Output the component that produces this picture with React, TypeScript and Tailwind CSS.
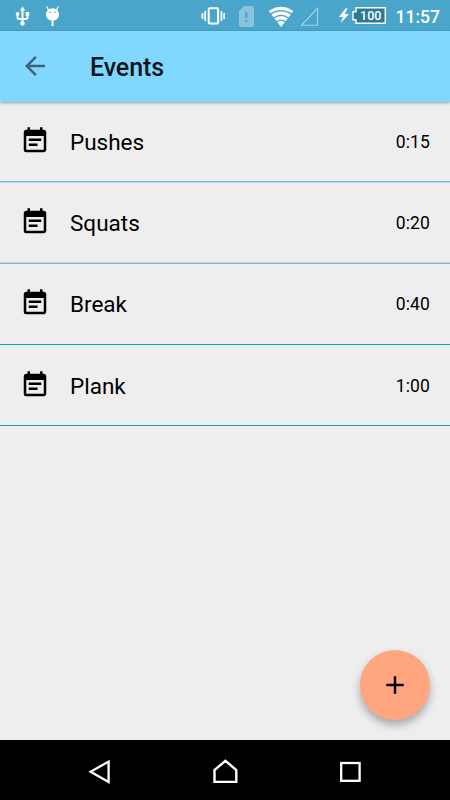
import React from 'react';
import { MdAdd, MdArrowBack, MdEventNote } from 'react-icons/md';

interface WorkoutEvent {
  name: string;
  time: string;
  divider: string;
}

const EVENTS: WorkoutEvent[] = [
  { name: 'Pushes', time: '0:15', divider: 'h-[80px] pt-px border-[#7bb3ce] shadow-[0_1px_0_#b4daec]' },
  { name: 'Squats', time: '0:20', divider: 'h-[82px] border-[#7bb3ce] shadow-[inset_0_-1px_0_#b4daec]' },
  { name: 'Break', time: '0:40', divider: 'h-[81px] border-[#0c9cc8]' },
  { name: 'Plank', time: '1:00', divider: 'h-[81px] pt-px border-[#2795bb]' },
];

const StatusBar: React.FC = () => (
  <div className="h-[31px] shrink-0 bg-[#4aa5cb]">
    <svg width="450" height="31" viewBox="0 0 450 31" fill="none">
      {/* usb */}
      <g stroke="#fff" strokeWidth="1.9">
        <path d="M22.5 9v14M17.5 14v3.2q0 1.8 2 1.8h6q2 0 2-1.8V14" />
      </g>
      <g fill="#fff">
        <path d="M22.5 6.5l2.7 4h-5.4z" />
        <circle cx="22.5" cy="23.5" r="2.2" />
        <circle cx="17.6" cy="13.8" r="1.9" />
        <path d="M25.6 12h3.6v3.6h-3.6z" />
      </g>
      {/* debug */}
      <ellipse cx="52.5" cy="14.5" rx="6.5" ry="6.2" fill="#fff" />
      <path d="M48.5 10L46.7 6.5M56.5 10l1.8-3.5" stroke="#fff" strokeWidth="1.2" />
      <path d="M52.5 21v5" stroke="#fff" strokeWidth="2" />
      <circle cx="50" cy="12.3" r="0.8" fill="#4aa5cb" />
      <circle cx="55" cy="12.3" r="0.8" fill="#4aa5cb" />
      {/* vibrate */}
      <rect x="208.7" y="8.2" width="9.4" height="15.4" rx="1" stroke="#fff" strokeWidth="2" />
      <path d="M205.2 11v10M221.4 11v10M202.4 13v6M224.2 13v6" stroke="#fff" strokeWidth="1.8" />
      {/* sim */}
      <path d="M244 6h8q2 0 2 2v17q0 2-2 2h-11q-2 0-2-2V11z" fill="#89c3dc" />
      <path d="M246.3 12v6M246.3 19.8v2.4" stroke="#4aa5cb" strokeWidth="2.2" />
      {/* wifi */}
      <path d="M268.8 11q12.2-8.6 24.6 0L281.1 27z" fill="#fff" />
      <path
        d="M270.2 14.2q10.9-7.3 21.8 0M273.1 18.2q8-5.6 16 0M276.1 22q5-3.6 10 0"
        stroke="#4aa5cb"
        strokeWidth="1.2"
      />
      {/* signal */}
      <path d="M317.5 8.2v17.1h-16z" stroke="#a4d2e5" strokeWidth="1.1" />
      {/* battery */}
      <path d="M345.8 8.2L338.8 17h4.2l-2.6 6.2 8.6-9.2h-4.4l3-5.8z" fill="#fff" />
      <path d="M356 7.7h29.3v15.6H356v-3.6h-3v-8h3z" fill="#2f7893" stroke="#fff" strokeWidth="1.4" />
      <text x="370.7" y="20.1" textAnchor="middle" fill="#fff" className="font-['Roboto',sans-serif] text-[12.5px] font-medium">
        100
      </text>
      <text x="440" y="22.6" textAnchor="end" fill="#fff" className="font-['Roboto',sans-serif] text-[17.5px] font-medium">
        11:57
      </text>
    </svg>
  </div>
);

const NavigationBar: React.FC = () => (
  <div className="flex h-[60px] shrink-0 items-center justify-between bg-black px-[85px] pt-[3px]">
    <svg width="30" height="30" viewBox="0 0 30 30" fill="none" stroke="#fff" strokeWidth="2.3">
      <path d="M23.6 4.6v20.4L5.6 14.8z" />
    </svg>
    <svg width="30" height="30" viewBox="0 0 30 30" fill="none" stroke="#fff" strokeWidth="2.4">
      <path d="M4.5 24.9h21.8V13L15.4 3.8 4.5 13z" />
    </svg>
    <svg width="30" height="30" viewBox="0 0 30 30" fill="none" stroke="#fff" strokeWidth="2.3">
      <rect x="6.2" y="6" width="18.4" height="17.8" />
    </svg>
  </div>
);

const App: React.FC = () => {
  return (
    <div className="relative flex h-[800px] w-[450px] flex-col overflow-hidden bg-[#eee] font-['Roboto',sans-serif] text-black">
      <StatusBar />
      <header className="z-10 flex h-[71px] shrink-0 items-center bg-[#80d8ff] pl-5 shadow-[0_1px_3px_rgba(0,0,0,0.35)]">
        <MdArrowBack size={30} className="mb-px text-[#3d6478]" />
        <h1 className="ml-10 pt-[2px] text-[25px] font-medium leading-[30px] tracking-[-0.1px] text-[#0d1519]">Events</h1>
      </header>

      <main className="flex-1">
        {EVENTS.map((event) => (
          <div key={event.name} className={`flex items-center border-b px-5 ${event.divider}`}>
            <MdEventNote size={30} className="mb-[2px]" />
            <span className="ml-5 flex-1 text-[22.5px] leading-[30px]">{event.name}</span>
            <span className="text-[17.5px] leading-[24px] tracking-[0.1px]">{event.time}</span>
          </div>
        ))}
      </main>

      <button className="absolute right-5 bottom-20 flex size-[70px] items-center justify-center rounded-full bg-[#ffa680] shadow-[0_5px_8px_rgba(0,0,0,0.3)]">
        <MdAdd size={30} />
      </button>

      <NavigationBar />
    </div>
  );
};

export default App;
